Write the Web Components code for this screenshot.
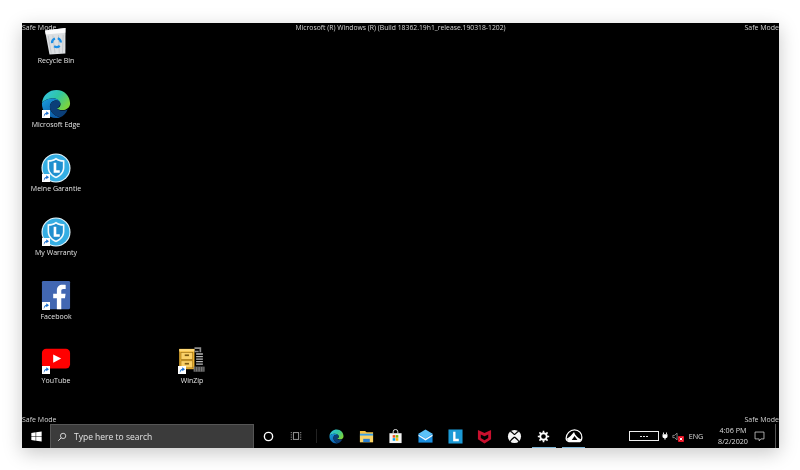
<!DOCTYPE html>
<html>
<head>
<meta charset="utf-8">
<title>Safe Mode</title>
<style>
  html, body { margin: 0; height: 100%; background: #fff; }
  body { font-family: "Open Sans", "Noto Sans", sans-serif; }
</style>
</head>
<body>
<safe-screen>
  <desktop-area>
    <desk-icon label="Recycle Bin" name="bin" noarrow></desk-icon>
    <desk-icon label="Microsoft Edge" name="edge"></desk-icon>
    <desk-icon label="Meine Garantie" name="shield"></desk-icon>
    <desk-icon label="My Warranty" name="shield"></desk-icon>
    <desk-icon label="Facebook" name="facebook"></desk-icon>
    <desk-icon label="YouTube" name="youtube"></desk-icon>
    <desk-icon label="WinZip" name="winzip" style="grid-column:3;grid-row:6"></desk-icon>
  </desktop-area>
  <task-bar></task-bar>
</safe-screen>

<script>
// all glyphs live here, every one drawn on a 32x32 box
const GLYPHS = {
  bin: `<g transform="rotate(-4 16 16)">
      <path d="M5 5 L27 4 L25 31 L8 31 Z" fill="#dcdfe2"/>
      <path d="M5 5 L27 4 L26.400 9 L5.500 9.500 Z" fill="#fbfbfc"/>
      <path d="M8 11 L10 30M13 11 L14 30M19 11 L18.500 30M24 11 L22 30" stroke="#bcc0c4" stroke-width=".8"/>
      <path d="M11.500 19 A5 5 0 0 1 15 14.300M18 14.300 A5 5 0 0 1 21 19M19.500 22.500 A5 5 0 0 1 13.500 22.500" fill="none" stroke="#1b8fe6" stroke-width="2.400"/>
    </g>`,
  edge: `<defs>
      <linearGradient id="e1" x1="0" y1="0" x2="1" y2=".6"><stop offset="0" stop-color="#35c1f1"/><stop offset=".55" stop-color="#2fc6a4"/><stop offset="1" stop-color="#7ad33f"/></linearGradient>
      <linearGradient id="e2" x1="0" y1="0" x2=".7" y2="1"><stop offset="0" stop-color="#1aa0e0"/><stop offset="1" stop-color="#0c59a4"/></linearGradient>
    </defs>
    <path d="M1 15 C2 6 9 1 16.500 1 C25 1 31 7.500 31 15.500 C31 20 27 22.500 23 22.500 C19.500 22.500 17.500 21.500 17 20.500 C20 20 21.500 17.500 20.500 15 C19 11 15 9.500 11 10 C6 10.500 2.500 12.500 1 15Z" fill="url(#e1)"/>
    <path d="M1 15 C2.500 12.500 6 10.500 11 10 C15 9.500 18.500 11 20 13 C14 11 9.500 14 9.500 19 C9.500 24 14 29 20.500 30 C18.800 30.700 17.500 31 16 31 C7.500 31 .5 24 1 15Z" fill="url(#e2)"/>
    <path d="M9.500 19 C9.500 14 14 11.500 18.500 12.500 C20.500 13.500 21.200 15 20.500 16.500 C19.700 18.500 18 20 17 20.500 C17.800 22 20 23 23 23 C25.500 23 27.500 22 28.500 21.500 C26.800 26 23.500 29 20.500 30 C14 29 9.500 24 9.500 19Z" fill="#0b3f78"/>`,
  shield: `<circle cx="16" cy="16" r="15.500" fill="#e8f6fc"/>
    <circle cx="16" cy="16" r="14.300" fill="#35aee3"/>
    <path d="M16 5 C19 7 21.800 7.600 25 7.600 V15.500 C25 20.800 21.300 24.900 16 27 C10.700 24.900 7 20.800 7 15.500 V7.600 C10.200 7.600 13 7 16 5Z" fill="#f2fafd"/>
    <path d="M16 7.200 C18.600 8.800 21 9.300 23.300 9.400 V15.500 C23.300 19.800 20.400 23.200 16 25.100 C11.600 23.200 8.700 19.800 8.700 15.500 V9.400 C11 9.300 13.400 8.800 16 7.200Z" fill="#1f8fcf"/>
    <path d="M13.500 10.500 h2.800 v8 h3.700 V21 h-6.500Z" fill="#fff"/>`,
  facebook: `<g transform="translate(1 0) scale(.9375)">
      <rect x="0" y="0" width="32" height="32" rx="1.500" fill="#4267b2"/>
      <path d="M22 32 V19.500 H26.200 L26.900 14.500 H22 V11.500 C22 10 22.500 9 24.500 9 H27 V4.500 C26.500 4.400 25 4.300 23.300 4.300 C19.600 4.300 17 6.500 17 10.800 V14.500 H12.800 V19.500 H17 V32Z" fill="#fff"/>
    </g>`,
  youtube: `<rect x="1" y="4" width="30" height="21" rx="4.500" fill="#f00"/>
    <path d="M13 10 L21.500 14.500 L13 19Z" fill="#fff"/>`,
  winzip: `<g transform="translate(1.500 1.500) scale(.9)">
      <rect x="1" y="3" width="18" height="24" fill="#f2b632"/>
      <rect x="1" y="3" width="18" height="3" fill="#ffd875"/>
      <rect x="3" y="7" width="14" height="8.500" fill="#fbd168" stroke="#9a6e12" stroke-width=".8"/>
      <rect x="3" y="17" width="14" height="8.500" fill="#fbd168" stroke="#9a6e12" stroke-width=".8"/>
      <rect x="7.500" y="9.500" width="5" height="2" fill="#7d5a10"/>
      <rect x="7.500" y="19.500" width="5" height="2" fill="#7d5a10"/>
      <path d="M19 2 H26 V7 M19 6 H24" fill="none" stroke="#8d8d8d" stroke-width="2"/>
      <path d="M21 9 h8 M21 12 h8 M21 15 h8 M21 18 h8 M21 21 h8" stroke="#b9b9b9" stroke-width="1.500"/>
      <rect x="18" y="24" width="13" height="6" fill="#777"/>
      <path d="M20 24 v6 M23 24 v6 M26 24 v6 M29 24 v6" stroke="#2a2a2a" stroke-width=".9"/>
    </g>`,
  arrow: `<rect x="0" y="0" width="32" height="32" fill="#fff"/>
    <path d="M7 28 C7 17 11 12 17 10.500 V5 L28 13 L17 21 V16 C13.500 17 11 20 7 28Z" fill="#1a6fd0"/>`,
  start: `<path d="M1 5.500 L13.500 3.800 V15 H1Z M15 3.600 L31 1.500 V15 H15Z M1 17 H13.500 V28.200 L1 26.500Z M15 17 H31 V30.500 L15 28.400Z" fill="#fff"/>`,
  search: `<circle cx="19.500" cy="12.500" r="8.500" fill="none" stroke="#eee" stroke-width="2.600"/><path d="M13.500 18.500 L4 28" stroke="#eee" stroke-width="2.800"/>`,
  cortana: `<circle cx="16" cy="16" r="12" fill="none" stroke="#fff" stroke-width="4"/>`,
  task: `<rect x="9" y="7" width="14" height="18" fill="none" stroke="#a8a8a8" stroke-width="2.400"/>
    <path d="M2 7 h3 M2 13 h3 M2 19 h3 M2 25 h3 M27 7 h3 M27 13 h3 M27 19 h3 M27 25 h3" stroke="#a8a8a8" stroke-width="2.400"/>`,
  folder: `<path d="M2 4 H13 L16 7 H30 V28 H2Z" fill="#f6c343"/>
    <rect x="2" y="10" width="28" height="6" fill="#3aa0e8"/>
    <rect x="2" y="14" width="28" height="14" fill="#f9d367"/>
    <rect x="9" y="21" width="14" height="7" fill="#2a7fd0"/>`,
  store: `<path d="M11 9 V6 A5 5 0 0 1 21 6 V9" fill="none" stroke="#eee" stroke-width="2"/>
    <rect x="3" y="9" width="26" height="21" fill="#f4f4f4"/>
    <rect x="10" y="13" width="5.500" height="5.500" fill="#f25022"/><rect x="16.500" y="13" width="5.500" height="5.500" fill="#7fba00"/>
    <rect x="10" y="19.500" width="5.500" height="5.500" fill="#00a4ef"/><rect x="16.500" y="19.500" width="5.500" height="5.500" fill="#ffb900"/>`,
  mail: `<rect x="1" y="10" width="30" height="19" fill="#1b8fe0"/>
    <path d="M1 10 L16 1 L31 10 L16 20Z" fill="#5cc1f7"/>
    <path d="M1 11.500 L16 21 L31 11.500 V15 L16 24.500 L1 15Z" fill="#eef8ff"/>`,
  lenovo: `<rect x="1" y="1" width="30" height="30" fill="#1c9ad6"/>
    <path d="M11 6 h5 v15 h7 v5 h-12Z" fill="#fff"/>`,
  mcafee: `<path d="M2 2 L16 8.500 L30 2 V22 L16 31 L2 22Z" fill="#c8102e"/>
    <path d="M8 11.500 L16 15.500 L24 11.500 V19 L16 24 L8 19Z" fill="#000"/>`,
  xbox: `<circle cx="16" cy="16" r="14" fill="#f4f4f4"/>
    <path d="M16 12 C12 8 9 5 7 5 M16 12 C20 8 23 5 25 5 M16 17 C11 21 6 25 6 29 M16 17 C21 21 26 25 26 29" fill="none" stroke="#000" stroke-width="2.600"/>`,
  gear: `<circle cx="16" cy="16" r="8" fill="none" stroke="#fff" stroke-width="4.500"/>
    <path d="M16 2 V7 M16 25 V30 M2 16 H7 M25 16 H30 M6 6 L9.500 9.500 M22.500 22.500 L26 26 M26 6 L22.500 9.500 M9.500 22.500 L6 26" stroke="#fff" stroke-width="4"/>`,
  arc: `<path d="M2 20 C2 12 9 5 17 5 C25 5 30 12 30 18 C30 22 28 25 26 26 H7 C4 25 2 23 2 20Z" fill="none" stroke="#fff" stroke-width="2.200"/>
    <path d="M3 21 C8 19 12 14 16 9 C18 15 23 20 29 22 L26 26 H7Z" fill="#fff"/>
    <path d="M12 23 L17 16 L22 23Z" fill="#000"/>`,
  plug: `<path d="M10 2 V9 M22 2 V9" stroke="#fff" stroke-width="3.500"/>
    <path d="M6 9 H26 V18 C26 22 22 24 18.500 24 V30 H13.500 V24 C10 24 6 22 6 18Z" fill="#fff"/>`,
  speaker: `<path d="M3 12 H9 L18 4 V28 L9 20 H3Z" fill="none" stroke="#c8c8c8" stroke-width="2.200"/>`,
  muted: `<rect x="0" y="0" width="32" height="32" rx="4" fill="#e81123"/>
    <path d="M9 9 L23 23 M23 9 L9 23" stroke="#fff" stroke-width="5"/>`,
  bubble: `<path d="M3 3 H29 V23 H20 L15 29 V23 H3Z" fill="none" stroke="#d8d8d8" stroke-width="2.200"/>`
};

class AppGlyph extends HTMLElement {
  connectedCallback() {
    const size = this.getAttribute("size") || 32;
    this.attachShadow({ mode: "open" }).innerHTML = `
      <style>
        :host { display: block; width: ${size}px; height: ${size}px; }
        svg { display: block; width: 100%; height: 100%; }
      </style>
      <svg viewBox="0 0 32 32">${GLYPHS[this.getAttribute("name")]}</svg>`;
  }
}

class DeskIcon extends HTMLElement {
  connectedCallback() {
    const arrow = this.hasAttribute("noarrow") ? "" : `<app-glyph class="arrow" name="arrow" size="8"></app-glyph>`;
    this.attachShadow({ mode: "open" }).innerHTML = `
      <style>
        :host { display: flex; flex-direction: column; align-items: center; }
        .pic { position: relative; width: 30px; height: 30px; margin-bottom: 1px; }
        .arrow { position: absolute; left: 1px; bottom: 1px; }
        span { color: #e4e4e4; font-size: 7px; line-height: 10px; white-space: nowrap; }
      </style>
      <div class="pic"><app-glyph name="${this.getAttribute("name")}" size="30"></app-glyph>${arrow}</div>
      <span>${this.getAttribute("label")}</span>`;
  }
}

class DesktopArea extends HTMLElement {
  constructor() {
    super();
    this.attachShadow({ mode: "open" }).innerHTML = `
      <style>
        :host {
          flex: 1; position: relative; display: grid;
          grid-template-columns: repeat(3, 68px); grid-template-rows: repeat(6, 64px);
          grid-auto-flow: column; padding-top: 2px; box-sizing: border-box;
        }
        /* watermarks sit under the icons, the bin covers the end of the first one */
        .wm { position: absolute; z-index: -1; color: #d4d4d4; font-size: 7px; line-height: 10px; white-space: nowrap; }
        .tl { left: 0; top: 0; } .tr { right: 0; top: 0; }
        .bl { left: 0; bottom: -1px; } .br { right: 0; bottom: -1px; }
        .build { left: 0; right: 0; top: 0; text-align: center; font-size: 6.800px; }
      </style>
      <slot></slot>
      <div class="wm tl">Safe Mode</div>
      <div class="wm build">Microsoft (R) Windows (R) (Build 18362.19h1_release.190318-1202)</div>
      <div class="wm tr">Safe Mode</div>
      <div class="wm bl">Safe Mode</div>
      <div class="wm br">Safe Mode</div>`;
  }
}

class TaskBar extends HTMLElement {
  constructor() {
    super();
    const pins = ["edge", "folder", "store", "mail", "lenovo", "mcafee", "xbox", "gear", "arc"];
    const running = ["gear", "arc"];
    const sizes = { gear: 13, arc: 18 };
    this.attachShadow({ mode: "open" }).innerHTML = `
      <style>
        :host { display: flex; height: 24px; background: #000; color: #dedede; font-size: 7.200px; align-items: stretch; flex: none; }
        .cell { display: flex; align-items: center; justify-content: center; flex: none; box-sizing: border-box; }
        .start { width: 28px; }
        .search {
          width: 204px; background: #3b3b3b; border: 1px solid #565656; border-bottom: 0; box-sizing: border-box;
          display: flex; align-items: center; gap: 7px; padding-left: 6px; color: #e4e4e4; font-size: 8.500px;
        }
        .tool { width: 28px; }
        .sep { width: 12px; }
        .sep i { display: block; width: 1px; height: 14px; background: #222; }
        .pins { display: flex; }
        .pin { width: 29.600px; height: 24px; position: relative; }
        .pin.on::after { content: ""; position: absolute; left: 3px; right: 3px; bottom: 0; height: 1px; background: #7fb5d5; }
        .tray { margin-left: auto; display: flex; align-items: center; }
        .batt {
          width: 30px; height: 10px; border: 1px solid #eee; box-sizing: border-box;
          display: flex; align-items: center; justify-content: center; gap: 1.500px; margin-right: 2px;
        }
        .batt i { width: 1.500px; height: 1px; background: #ddd; }
        .eng { width: 22px; text-align: center; margin-left: 3px; }
        .clock { width: 30px; text-align: center; line-height: 11px; margin-left: 11px; white-space: nowrap; }
        .note { width: 22px; }
        .show { width: 4px; height: 24px; border-left: 1px solid #555; box-sizing: border-box; margin-left: 5px; }
        .mute { position: relative; margin-left: 3px; width: 10px; }
        .mute app-glyph:last-child { position: absolute; right: -2px; bottom: -1px; }
      </style>
      <div class="cell start"><app-glyph name="start" size="11"></app-glyph></div>
      <div class="search"><app-glyph name="search" size="10"></app-glyph><span>Type here to search</span></div>
      <div class="cell tool"><app-glyph name="cortana" size="11"></app-glyph></div>
      <div class="cell tool"><app-glyph name="task" size="12"></app-glyph></div>
      <div class="cell sep"><i></i></div>
      <div class="pins">
        ${pins.map(p => `<div class="cell pin ${running.includes(p) ? "on" : ""}"><app-glyph name="${p}" size="${sizes[p] || 15}"></app-glyph></div>`).join("")}
      </div>
      <div class="tray">
        <div class="batt"><i></i><i></i><i></i></div>
        <app-glyph name="plug" size="8"></app-glyph>
        <div class="mute"><app-glyph name="speaker" size="9"></app-glyph><app-glyph name="muted" size="6"></app-glyph></div>
        <div class="eng">ENG</div>
        <div class="clock">4:06 PM<br>8/2/2020</div>
        <div class="cell note"><app-glyph name="bubble" size="11"></app-glyph></div>
        <div class="show"></div>
      </div>`;
  }
}

class SafeScreen extends HTMLElement {
  constructor() {
    super();
    this.attachShadow({ mode: "open" }).innerHTML = `
      <style>
        :host {
          display: flex; flex-direction: column; box-sizing: border-box;
          width: 757px; height: 425px; margin: 23px 0 0 22px; background: #000;
          box-shadow: 0 5px 18px rgba(0,0,0,.22); filter: blur(.25px);
        }
      </style>
      <slot></slot>`;
  }
}

customElements.define("app-glyph", AppGlyph);
customElements.define("desk-icon", DeskIcon);
customElements.define("desktop-area", DesktopArea);
customElements.define("task-bar", TaskBar);
customElements.define("safe-screen", SafeScreen);
</script>
</body>
</html>
